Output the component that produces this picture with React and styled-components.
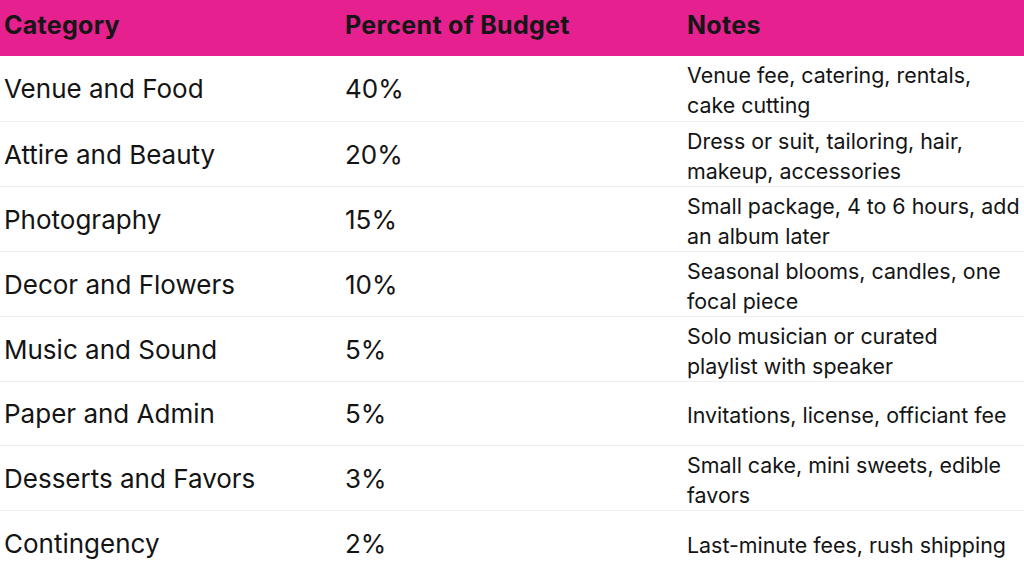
import React from 'react'
import styled, { createGlobalStyle } from 'styled-components'

const GlobalStyle = createGlobalStyle`
  html, body {
    margin: 0;
    padding: 0;
    background: #ffffff;
  }
  body {
    font-family: Inter, "Liberation Sans", sans-serif;
    color: #111111;
  }
`

const Table = styled.div`
  width: 1024px;
  height: 575px;
  display: grid;
  grid-template-columns: 341px 342px 1fr;
  grid-template-rows: 56px repeat(8, 1fr);
`

const HeadCell = styled.div`
  background: #e6208e;
  display: flex;
  align-items: center;
  padding-left: ${p => p.$pad || 4}px;
  padding-bottom: 6px;
  font-size: 25px;
  letter-spacing: 0.3px;
  font-weight: 700;
  color: #161616;
`

const Cell = styled.div`
  display: flex;
  align-items: center;
  padding-left: ${p => p.$pad || 4}px;
  padding-top: 2px;
  border-top: ${p => (p.$first ? 'none' : '1px solid #efefef')};
  font-size: 26px;
  line-height: 32px;
  color: #141414;
`

const NoteCell = styled(Cell)`
  font-size: 21.4px;
  line-height: 30px;
  padding-top: 4px;
`

const rows = [
  ['Venue and Food', '40%', ['Venue fee, catering, rentals,', 'cake cutting']],
  ['Attire and Beauty', '20%', ['Dress or suit, tailoring, hair,', 'makeup, accessories']],
  ['Photography', '15%', ['Small package, 4 to 6 hours, add', 'an album later']],
  ['Decor and Flowers', '10%', ['Seasonal blooms, candles, one', 'focal piece']],
  ['Music and Sound', '5%', ['Solo musician or curated', 'playlist with speaker']],
  ['Paper and Admin', '5%', ['Invitations, license, officiant fee']],
  ['Desserts and Favors', '3%', ['Small cake, mini sweets, edible', 'favors']],
  ['Contingency', '2%', ['Last-minute fees, rush shipping']],
]

export default function App() {
  return (
    <>
      <GlobalStyle />
      <Table>
        <HeadCell>Category</HeadCell>
        <HeadCell $pad={4}>Percent of Budget</HeadCell>
        <HeadCell $pad={4}>Notes</HeadCell>
        {rows.map(([cat, pct, note], i) => (
          <React.Fragment key={cat}>
            <Cell $first={i === 0}>{cat}</Cell>
            <Cell $first={i === 0} $pad={4}>{pct}</Cell>
            <NoteCell $first={i === 0} $pad={4}>
              <div>
                {note.map((line, j) => (
                  <React.Fragment key={j}>
                    {j > 0 && <br />}
                    {line}
                  </React.Fragment>
                ))}
              </div>
            </NoteCell>
          </React.Fragment>
        ))}
      </Table>
    </>
  )
}
